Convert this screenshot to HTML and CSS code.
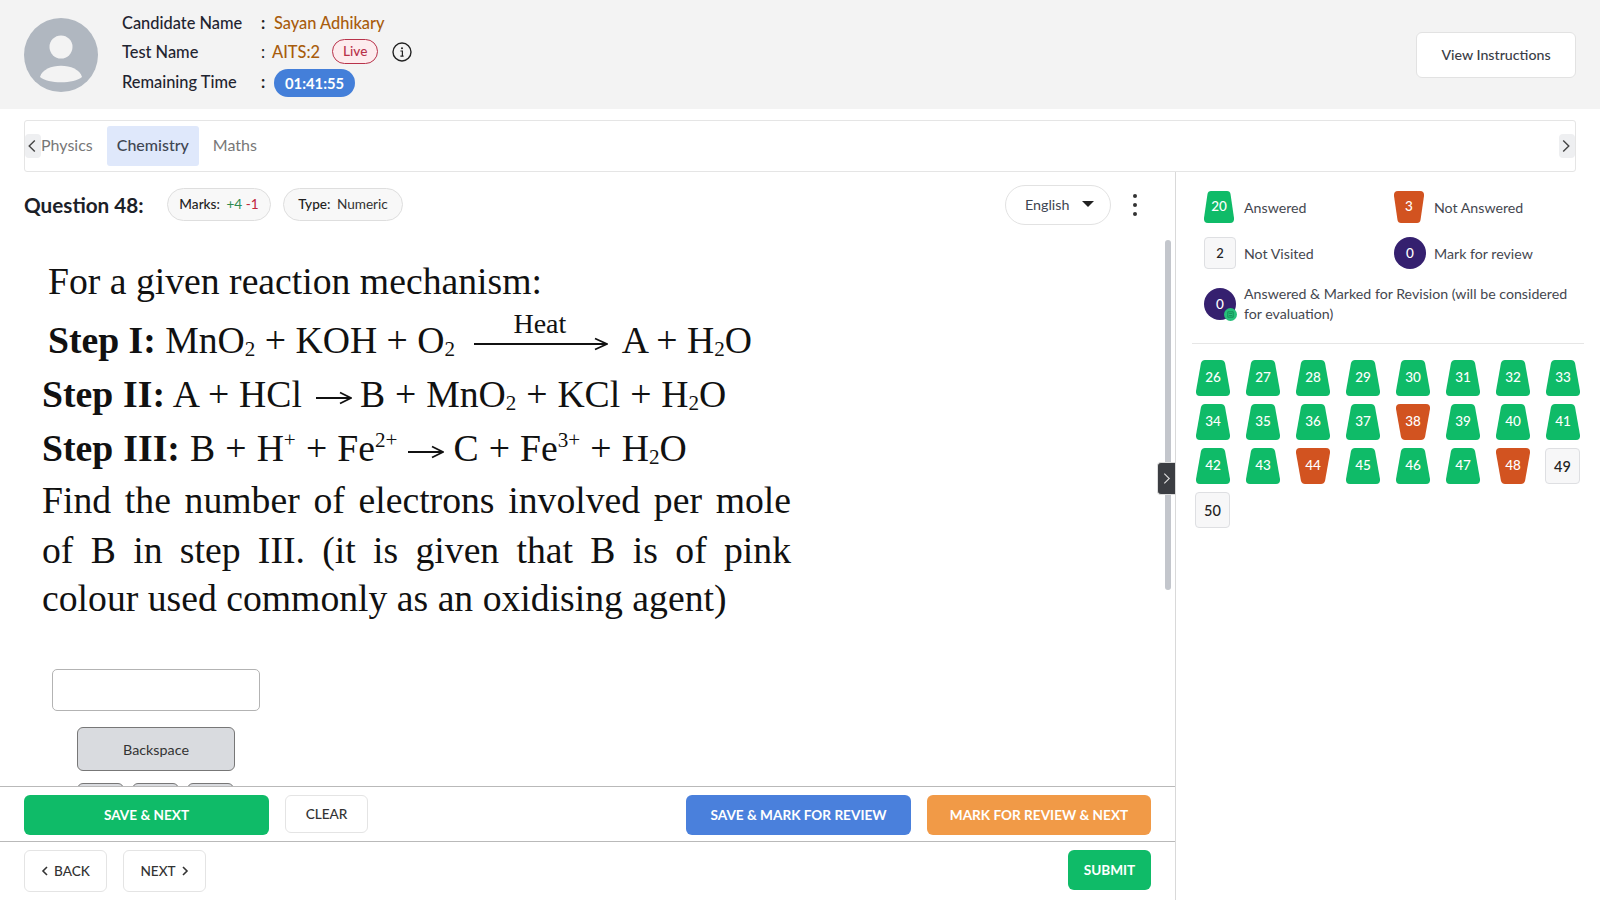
FILE: index.html
```html
<!DOCTYPE html>
<html>
<head>
  <meta charset="UTF-8">
  <title>Test Window</title>
  <link rel="stylesheet" href="styles.css">
</head>
<body>
  <header class="topbar">
    <svg class="avatar" viewBox="0 0 74 74">
      <circle cx="37" cy="37" r="37" fill="#b0b7c0"/>
      <circle cx="37" cy="29" r="11.5" fill="#f3f3f3"/>
      <path d="M16 59 C20 44 54 44 58 59 C50 66 24 66 16 59Z" fill="#f3f3f3"/>
    </svg>
    <div class="info">
      <div class="info-row">
        <span class="info-label">Candidate Name</span>
        <span class="colon">:</span>
        <span class="info-value">Sayan Adhikary</span>
      </div>
      <div class="info-row">
        <span class="info-label">Test Name</span>
        <span class="colon colon-thin">:</span>
        <span class="info-value test-value">AITS:2</span>
        <span class="live">Live</span>
        <svg class="info-icon" viewBox="0 0 20 20">
          <circle cx="10" cy="10" r="9" fill="none" stroke="#222" stroke-width="1.4"/>
          <circle cx="10" cy="6.2" r="1" fill="#222"/>
          <path d="M8.4 9h2v5M8.4 14.2h3.2" fill="none" stroke="#222" stroke-width="1.2"/>
        </svg>
      </div>
      <div class="info-row">
        <span class="info-label">Remaining Time</span>
        <span class="colon">:</span>
        <span class="timer">01:41:55</span>
      </div>
    </div>
    <button class="instructions">View Instructions</button>
  </header>

  <div class="tabs-wrap">
    <nav class="tabs">
      <span class="tab-arrow tab-arrow-left">
        <svg viewBox="0 0 10 14"><path d="M7 3 3 7l4 4" fill="none" stroke="#444" stroke-width="1"/></svg>
      </span>
      <span class="tab tab-first">Physics</span>
      <span class="tab tab-active">Chemistry</span>
      <span class="tab">Maths</span>
      <span class="tab-arrow tab-arrow-right">
        <svg viewBox="0 0 10 14"><path d="M3 3l4 4-4 4" fill="none" stroke="#444" stroke-width="1"/></svg>
      </span>
    </nav>
  </div>

  <main class="main">
    <section class="left">
      <div class="q-head">
        <h1 class="q-title">Question 48:</h1>
        <span class="pill pill-marks"><b>Marks:</b> <span class="plus">+4</span> <span class="minus">-1</span></span>
        <span class="pill pill-type"><b>Type:</b> Numeric</span>
        <span class="lang">English <i class="caret"></i></span>
        <span class="dots"><i></i><i></i><i></i></span>
      </div>

      <div class="q-body">
        <div class="q-text">
          <div class="l l1">For a given reaction mechanism:</div>
          <div class="l l2"><b>Step I:</b> MnO<sub>2</sub> + KOH + O<sub>2</sub>
            <span class="heat-arrow">
              <span class="heat">Heat</span>
              <svg viewBox="0 0 134 14"><path d="M0 7H132M121 1.5 133 7 121 12.5" fill="none" stroke="#111" stroke-width="1.8"/></svg>
            </span> A + H<sub>2</sub>O</div>
          <div class="l l3"><b>Step II:</b> A + HCl<svg class="arrow" viewBox="0 0 36 14"><path d="M0 7H34M24 1.5 35 7 24 12.5" fill="none" stroke="#111" stroke-width="1.8"/></svg>B + MnO<sub>2</sub> + KCl + H<sub>2</sub>O</div>
          <div class="l l4"><b>Step III:</b> B + H<sup>+</sup> + Fe<sup>2+</sup><svg class="arrow" viewBox="0 0 36 14"><path d="M0 7H34M24 1.5 35 7 24 12.5" fill="none" stroke="#111" stroke-width="1.8"/></svg>C + Fe<sup>3+</sup> + H<sub>2</sub>O</div>
          <div class="l l5 just">Find the number of electrons involved per mole</div>
          <div class="l l6 just">of B in step III. (it is given that B is of pink</div>
          <div class="l l7">colour used commonly as an oxidising agent)</div>
        </div>
        <input class="answer" type="text">
        <div class="keypad">
          <button class="key-back">Backspace</button>
          <div class="keys"><button></button><button></button><button></button></div>
        </div>
      </div>

      <div class="actions">
        <button class="btn btn-green btn-save">SAVE &amp; NEXT</button>
        <button class="btn btn-plain btn-clear">CLEAR</button>
        <button class="btn btn-blue">SAVE &amp; MARK FOR REVIEW</button>
        <button class="btn btn-orange">MARK FOR REVIEW &amp; NEXT</button>
      </div>
      <div class="nav">
        <button class="btn btn-plain btn-nav">
          <svg viewBox="0 0 8 12"><path d="M6 2 2 6l4 4" fill="none" stroke="#333" stroke-width="1.6"/></svg> BACK
        </button>
        <button class="btn btn-plain btn-nav">
          NEXT <svg viewBox="0 0 8 12"><path d="M2 2l4 4-4 4" fill="none" stroke="#333" stroke-width="1.6"/></svg>
        </button>
        <button class="btn btn-green btn-submit">SUBMIT</button>
      </div>

      <div class="scroll-thumb"></div>
      <div class="collapse">
        <svg viewBox="0 0 10 14"><path d="M3 2.5 7.5 7 3 11.5" fill="none" stroke="#ddd" stroke-width="1"/></svg>
      </div>
    </section>

    <aside class="right">
      <div class="legend">
        <div class="legend-item"><span class="badge lg green">20</span>Answered</div>
        <div class="legend-item"><span class="badge lg red">3</span>Not Answered</div>
        <div class="legend-item"><span class="badge lg blank">2</span>Not Visited</div>
        <div class="legend-item"><span class="badge lg purple">0</span>Mark for review</div>
        <div class="legend-item legend-wide">
          <span class="badge lg purple">0<svg class="mini" viewBox="0 0 12 12"><circle cx="6" cy="6" r="6" fill="#27c07a"/><path d="M3.5 3.5h5v5h-5zM4.5 5h3M4.5 7h3" fill="none" stroke="#128a52" stroke-width=".8"/></svg></span>
          <span class="legend-long">Answered &amp; Marked for Revision (will be considered for evaluation)</span>
        </div>
      </div>
      <div class="palette">
        <span class="badge green">26</span><span class="badge green">27</span><span class="badge green">28</span><span class="badge green">29</span><span class="badge green">30</span><span class="badge green">31</span><span class="badge green">32</span><span class="badge green">33</span>
        <span class="badge green">34</span><span class="badge green">35</span><span class="badge green">36</span><span class="badge green">37</span><span class="badge red">38</span><span class="badge green">39</span><span class="badge green">40</span><span class="badge green">41</span>
        <span class="badge green">42</span><span class="badge green">43</span><span class="badge red">44</span><span class="badge green">45</span><span class="badge green">46</span><span class="badge green">47</span><span class="badge red">48</span><span class="badge blank">49</span>
        <span class="badge blank">50</span>
      </div>
    </aside>
  </main>
</body>
</html>
```

FILE: styles.css
```css
* {
  box-sizing: border-box;
}

html, body {
  margin: 0;
  height: 900px;
  overflow: hidden;
  background: #fff;
  font-family: "Lato", "Liberation Sans", sans-serif;
  color: #222;
}

button {
  font-family: inherit;
  cursor: pointer;
}

/* top bar */
.topbar {
  display: flex;
  align-items: center;
  height: 109px;
  padding: 0 24px;
  background: #f3f3f3;
}

.avatar {
  width: 74px;
  height: 74px;
  margin-right: 24px;
}

.info {
  display: flex;
  flex-direction: column;
  gap: 6.5px;
  flex: 1;
  padding-bottom: 6px;
}

.info-row {
  display: flex;
  align-items: center;
  height: 23px;
  font-size: 16.4px;
  font-weight: 500;
}

.info-label {
  width: 139px;
  color: #1f2430;
}

.colon {
  width: 13px;
  font-weight: 700;
}

.colon-thin {
  width: 11px;
  font-weight: 400;
}

.info-value {
  color: #a85c0c;
}

.live {
  margin-left: 12px;
  padding: 3px 10px;
  font-size: 13.6px;
  line-height: 17px;
  color: #b8324a;
  background: #fdecee;
  border: 1px solid #b8324a;
  border-radius: 13px;
}

.info-icon {
  width: 20px;
  height: 20px;
  margin-left: 14px;
}

.timer {
  margin-top: 4px;
  padding: 4px 11px;
  font-size: 14.8px;
  line-height: 20px;
  color: #fff;
  font-weight: 700;
  background: #447fd9;
  border-radius: 14px;
}

.instructions {
  width: 160px;
  height: 46px;
  font-size: 14.2px;
  font-weight: 500;
  color: #3a3d46;
  background: #fff;
  border: 1px solid #e2e2e2;
  border-radius: 6px;
}

/* subject tabs */
.tabs-wrap {
  padding: 11px 24px 0;
}

.tabs {
  position: relative;
  display: flex;
  align-items: center;
  height: 52px;
  padding-left: 16px;
  font-size: 16px;
  border: 1px solid #e5e5e5;
  border-radius: 3px;
}

.tab {
  padding: 0 10px;
  height: 40px;
  line-height: 38px;
  color: #777;
}

.tab-first {
  padding: 0 14px 0 0;
}

.tab-active {
  margin-right: 4px;
  color: #3f4652;
  font-weight: 500;
  background: #dfe8fb;
  border-radius: 3px;
}

.tab-arrow {
  position: absolute;
  top: 13px;
  width: 16px;
  height: 24px;
  background: #eeeff1;
  border-radius: 4px;
}

.tab-arrow svg {
  display: block;
  width: 14px;
  height: 24px;
}

.tab-arrow-left {
  left: 0;
}

.tab-arrow-right {
  right: 0;
}

/* main split */
.main {
  display: flex;
  height: 728px;
}

.left {
  position: relative;
  display: flex;
  flex-direction: column;
  width: 1176px;
  flex-shrink: 0;
  border-right: 1px solid #d9d9d9;
}

.q-head {
  display: flex;
  align-items: center;
  height: 66px;
  padding: 0 24px 1px;
  flex-shrink: 0;
}

.q-title {
  width: 143px;
  margin: 0;
  font-size: 20.7px;
  font-weight: 700;
  color: #1c2128;
}

.pill {
  height: 33px;
  margin-right: 12px;
  font-size: 13.6px;
  line-height: 31px;
  text-align: center;
  color: #333;
  background: #f8f8f8;
  border: 1px solid #dedede;
  border-radius: 17px;
}

.pill-marks {
  width: 104px;
}

.pill-type {
  width: 120px;
}

.pill b {
  margin-right: 3px;
  font-weight: 500;
  color: #222;
}

.plus {
  color: #2e8b4f;
}

.minus {
  color: #c0273c;
}

.lang {
  display: flex;
  align-items: center;
  justify-content: space-between;
  width: 106px;
  height: 40px;
  margin-left: auto;
  padding: 0 16px 1px 19px;
  font-size: 14.3px;
  color: #3f4652;
  border: 1px solid #e2e2e2;
  border-radius: 20px;
}

.caret {
  width: 0;
  height: 0;
  border-left: 6px solid transparent;
  border-right: 6px solid transparent;
  border-top: 6px solid #222;
}

.dots {
  display: flex;
  flex-direction: column;
  gap: 5px;
  width: 5px;
  margin: 0 13px 0 22px;
}

.dots i {
  width: 4px;
  height: 4px;
  background: #333;
  border-radius: 50%;
}

/* question body */
.q-body {
  flex: 1;
  overflow: hidden;
  min-height: 0;
}

.q-text {
  font-family: "Liberation Serif", serif;
  font-size: 37.7px;
  color: #111;
  padding-left: 42px;
  height: 431px;
}

.l {
  white-space: nowrap;
  width: 749px;
}

.l sub {
  font-size: 56%;
  line-height: 0;
  vertical-align: -0.14em;
}

.l sup {
  font-size: 56%;
  line-height: 0;
}

.l b {
  font-weight: 700;
}

.l1 {
  padding: 21px 0 0 6px;
  line-height: 44px;
}

.l2 {
  padding: 15px 0 0 6px;
  line-height: 44px;
}

.l3 {
  padding-top: 5px;
  line-height: 54px;
  word-spacing: 0.5px;
}

.l4 {
  padding-top: 1px;
  line-height: 53px;
  word-spacing: 0.7px;
}

.l4 .arrow {
  margin: 0 9px 0 11px;
}

.l5 {
  line-height: 50px;
}

.l6 {
  line-height: 50px;
}

.l7 {
  line-height: 47px;
}

.just {
  white-space: normal;
  text-align: justify;
  text-align-last: justify;
}

.heat-arrow {
  position: relative;
  display: inline-block;
  width: 134px;
  height: 14px;
  margin: 0 6px 0 10px;
  vertical-align: 2px;
}

.heat-arrow svg {
  display: block;
  width: 134px;
  height: 14px;
}

.heat {
  position: absolute;
  left: 39px;
  top: -29px;
  font-size: 28px;
  line-height: 32px;
}

.arrow {
  width: 36px;
  height: 14px;
  margin: 0 8px 0 14px;
  vertical-align: 2.5px;
}

.answer {
  display: block;
  width: 208px;
  height: 42px;
  margin: 0 0 16px 52px;
  border: 1px solid #b3b3b3;
  border-radius: 5px;
  background: #fff;
}

.keypad {
  width: 158px;
  margin-left: 77px;
}

.key-back {
  display: block;
  width: 158px;
  height: 44px;
  margin-bottom: 12px;
  font-size: 14.3px;
  color: #333;
  background: #d9dbdf;
  border: 1px solid #777;
  border-radius: 6px;
}

.keys {
  display: flex;
  gap: 8px;
}

.keys button {
  width: 47px;
  height: 44px;
  background: #d9dbdf;
  border: 1px solid #777;
  border-radius: 6px;
}

/* bottom bars */
.actions, .nav {
  display: flex;
  align-items: flex-start;
  flex-shrink: 0;
  padding: 8px 24px 0;
  border-top: 1px solid #b9b9b9;
}

.actions {
  height: 55px;
  gap: 16px;
}

.nav {
  height: 59px;
  gap: 16px;
}

.btn {
  height: 40px;
  font-size: 13.6px;
  font-weight: 700;
  color: #fff;
  border: none;
  border-radius: 6px;
}

.btn-green {
  background: #0fbb68;
}

.btn-blue {
  width: 225px;
  margin-left: auto;
  background: #4a80dc;
}

.btn-orange {
  width: 224px;
  background: #f19a47;
}

.btn-save {
  width: 245px;
}

.btn-plain {
  font-weight: 500;
  color: #333;
  background: #fff;
  border: 1px solid #e4e4e4;
}

.btn-clear {
  width: 83px;
  height: 38px;
}

.btn-nav {
  display: flex;
  align-items: center;
  justify-content: center;
  gap: 5px;
  width: 83px;
  height: 42px;
}

.btn-nav svg {
  width: 8px;
  height: 12px;
}

.btn-submit {
  width: 83px;
  margin-left: auto;
}

.scroll-thumb {
  position: absolute;
  top: 68px;
  left: 1165px;
  width: 6px;
  height: 350px;
  background: #c3c6cc;
  border-radius: 3px;
}

.collapse {
  position: absolute;
  top: 290px;
  left: 1157px;
  width: 18px;
  height: 33px;
  background: #3b3d42;
  border: 1px solid #ddd;
  border-right: none;
  border-radius: 4px 0 0 4px;
}

.collapse svg {
  display: block;
  width: 11px;
  height: 31px;
  margin-left: 3px;
}

/* right panel */
.right {
  flex: 1;
  padding: 0 16px;
}

.legend {
  display: grid;
  grid-template-columns: 190px 1fr;
  grid-auto-rows: 32px;
  row-gap: 14px;
  padding: 19px 0 28px 12px;
  margin-bottom: 16px;
  font-size: 14.2px;
  color: #44474f;
  border-bottom: 1px solid #e6e6e6;
}

.legend-item {
  display: flex;
  align-items: center;
  gap: 10px;
}

.legend-wide {
  grid-column: span 2;
  margin-top: 5px;
  height: 32px;
  line-height: 20px;
}

.legend-long {
  width: 328px;
}

.badge {
  position: relative;
  display: flex;
  align-items: center;
  justify-content: center;
  width: 34px;
  height: 36px;
  flex-shrink: 0;
  font-size: 13.5px;
  font-weight: 500;
  color: #fff;
}

.green {
  padding-bottom: 3px;
  background: #0fbb68;
  clip-path: path("M9 0H25Q28 0 29 3L34 31Q34.5 36 30 36H4Q-.5 36 0 31L5 3Q6 0 9 0Z");
}

.red {
  padding-bottom: 3px;
  background: #d25320;
  clip-path: path("M4 0H30Q34.5 0 34 5L29 33Q28 36 25 36H9Q6 36 5 33L0 5Q-.5 0 4 0Z");
}

.blank {
  width: 35px;
  margin-left: -1px;
  color: #222;
  font-size: 14.5px;
  background: #f7f7f8;
  border: 1px solid #dedfe2;
  border-radius: 4px;
}

.lg {
  width: 30px;
  height: 32px;
}

.lg.green {
  clip-path: path("M7 0H23Q26 0 26.5 3L30 27Q30.5 32 26 32H4Q-.5 32 0 27L3.5 3Q4 0 7 0Z");
}

.lg.red {
  clip-path: path("M4 0H26Q30.5 0 30 5L26.5 29Q26 32 23 32H7Q4 32 3.5 29L0 5Q-.5 0 4 0Z");
}

.lg.blank {
  width: 32px;
  margin-left: 0;
  margin-right: -2px;
  font-size: 13px;
}

.purple {
  width: 32px;
  margin-right: -2px;
  background: #35206f;
  border-radius: 50%;
}

.mini {
  position: absolute;
  right: -1px;
  bottom: -1px;
  width: 13px;
  height: 13px;
}

.palette {
  display: grid;
  grid-template-columns: repeat(8, 34px);
  grid-auto-rows: 36px;
  column-gap: 16px;
  row-gap: 8px;
  padding-left: 4px;
}
```
